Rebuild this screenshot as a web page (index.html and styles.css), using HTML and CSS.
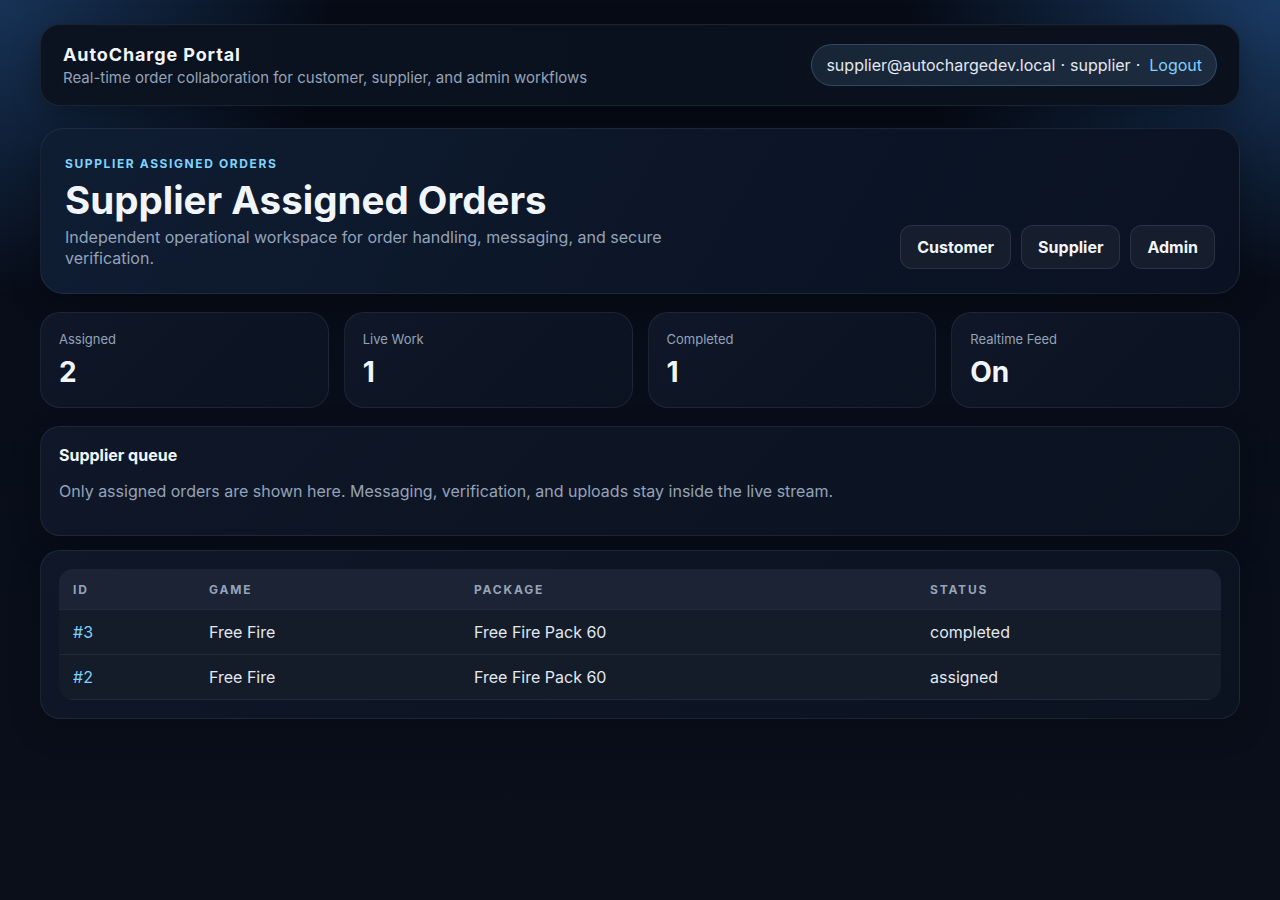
FILE: index.html
```html
<!DOCTYPE html>
<html lang="en">
  <head>
    <meta charset="UTF-8" />
    <meta name="viewport" content="width=device-width, initial-scale=1.0" />
    <title>AutoCharge Portal</title>
    <link rel="stylesheet" href="styles.css">
  </head>
  <body>
    <div class="page">
      <header class="topbar">
        <div class="brand">
          <div class="brand-title">AutoCharge Portal</div>
          <div class="brand-sub">Real-time order collaboration for customer, supplier, and admin workflows</div>
        </div>
        <div class="user-pill">
          <span>supplier@autochargedev.local</span>
          <span class="dot">·</span>
          <span>supplier</span>
          <span class="dot">·</span>
          <a href="#" class="logout">Logout</a>
        </div>
      </header>

      <section class="hero">
        <div class="hero-text">
          <div class="eyebrow">Supplier Assigned Orders</div>
          <h1>Supplier Assigned Orders</h1>
          <p>Independent operational workspace for order handling, messaging, and secure verification.</p>
        </div>
        <div class="role-buttons">
          <button>Customer</button>
          <button>Supplier</button>
          <button>Admin</button>
        </div>
      </section>

      <section class="stats">
        <div class="stat">
          <div class="stat-label">Assigned</div>
          <div class="stat-value">2</div>
        </div>
        <div class="stat">
          <div class="stat-label">Live Work</div>
          <div class="stat-value">1</div>
        </div>
        <div class="stat">
          <div class="stat-label">Completed</div>
          <div class="stat-value">1</div>
        </div>
        <div class="stat">
          <div class="stat-label">Realtime Feed</div>
          <div class="stat-value">On</div>
        </div>
      </section>

      <section class="card queue">
        <h3>Supplier queue</h3>
        <p>Only assigned orders are shown here. Messaging, verification, and uploads stay inside the live stream.</p>
      </section>

      <section class="card table-card">
        <div class="table-wrap">
          <table>
            <thead>
              <tr>
                <th class="col-id">ID</th>
                <th class="col-game">Game</th>
                <th class="col-package">Package</th>
                <th>Status</th>
              </tr>
            </thead>
            <tbody>
              <tr>
                <td><a href="#">#3</a></td>
                <td>Free Fire</td>
                <td>Free Fire Pack 60</td>
                <td>completed</td>
              </tr>
              <tr>
                <td><a href="#">#2</a></td>
                <td>Free Fire</td>
                <td>Free Fire Pack 60</td>
                <td>assigned</td>
              </tr>
            </tbody>
          </table>
        </div>
      </section>
    </div>
  </body>
</html>
```

FILE: styles.css
```css
* {
  box-sizing: border-box;
}
html,
body {
  margin: 0;
  padding: 0;
  min-height: 100%;
}
body {
  min-height: 100vh;
  font-family: Inter, "Noto Sans", sans-serif;
  color: #e2e8f0;
  background-color: #080d18;
  background-image:
    radial-gradient(ellipse 480px 420px at 0% 0%, rgba(40, 90, 150, 0.5), transparent 70%),
    radial-gradient(ellipse 540px 400px at 100% 0%, rgba(40, 90, 150, 0.6), transparent 70%),
    linear-gradient(180deg, #060b16 0%, #080e1a 60%, #0a0f1a 100%);
  background-repeat: no-repeat;
}
.page {
  width: 1200px;
  margin: 0 auto;
  padding-top: 24px;
  display: flex;
  flex-direction: column;
}
.topbar {
  height: 82px;
  display: flex;
  align-items: center;
  justify-content: space-between;
  padding: 0 22px;
  border: 1px solid rgba(148, 163, 184, 0.12);
  border-radius: 20px;
  background: linear-gradient(90deg, #0b1220 0%, #0a111d 100%);
  box-shadow: 0 10px 30px rgba(0, 0, 0, 0.3);
}
.brand-title {
  font-size: 18px;
  font-weight: 700;
  letter-spacing: 0.9px;
  color: #f1f5f9;
  margin-bottom: 3px;
}
.brand-sub {
  font-size: 15px;
  color: #94a3b8;
}
.user-pill {
  display: flex;
  align-items: center;
  gap: 4px;
  height: 42px;
  padding: 0 14px;
  border-radius: 999px;
  background: linear-gradient(90deg, #172537, #1d2b40);
  border: 1px solid rgba(125, 180, 220, 0.25);
  font-size: 16px;
  color: #e2e8f0;
}
.user-pill .dot {
  margin: 0 1px;
}
.logout {
  color: #7dd3fc;
  text-decoration: none;
  margin-left: 4px;
}
.hero {
  margin-top: 22px;
  height: 166px;
  display: flex;
  align-items: flex-end;
  justify-content: space-between;
  padding: 27px 24px 24px 24px;
  border: 1px solid rgba(148, 163, 184, 0.12);
  border-radius: 24px;
  background: linear-gradient(120deg, #0f1d33 0%, #0c1628 50%, #0a1222 100%);
  box-shadow: 0 10px 30px rgba(0, 0, 0, 0.3);
}
.eyebrow {
  font-size: 12px;
  font-weight: 700;
  letter-spacing: 1.6px;
  text-transform: uppercase;
  color: #7dd3fc;
}
.hero h1 {
  margin: 6px 0 4px;
  font-size: 38.5px;
  font-weight: 700;
  line-height: 1.2;
  color: #f1f5f9;
}
.hero p {
  margin: 0;
  width: 640px;
  font-size: 16px;
  line-height: 1.3;
  color: #94a3b8;
}
.role-buttons {
  display: flex;
  gap: 10px;
  margin-bottom: 0;
}
.role-buttons button {
  height: 44px;
  padding: 0 16px;
  border-radius: 12px;
  border: 1px solid rgba(148, 163, 184, 0.16);
  background: #161e2d;
  color: #f1f5f9;
  font-family: inherit;
  font-size: 16px;
  font-weight: 700;
  cursor: pointer;
}
.stats {
  margin-top: 18px;
  display: grid;
  grid-template-columns: repeat(4, 1fr);
  gap: 15px;
}
.stat {
  height: 96px;
  padding: 18px 18px;
  border: 1px solid rgba(148, 163, 184, 0.12);
  border-radius: 20px;
  background: linear-gradient(135deg, #0f1728 0%, #0b1220 100%);
}
.stat-label {
  font-size: 13px;
  color: #94a3b8;
}
.stat-value {
  margin-top: 8px;
  font-size: 28px;
  font-weight: 700;
  color: #f1f5f9;
}
.card {
  border: 1px solid rgba(148, 163, 184, 0.12);
  border-radius: 20px;
  background: linear-gradient(135deg, #0f1728 0%, #0b1220 100%);
  box-shadow: 0 10px 30px rgba(0, 0, 0, 0.25);
}
.queue {
  margin-top: 18px;
  height: 110px;
  padding: 18px 18px;
}
.queue h3 {
  margin: 0;
  font-size: 16px;
  font-weight: 700;
  color: #f1f5f9;
}
.queue p {
  margin: 16px 0 0;
  font-size: 16px;
  color: #94a3b8;
}
.table-card {
  margin-top: 14px;
  padding: 18px 18px;
}
.table-wrap {
  border-radius: 14px;
  overflow: hidden;
  background: #141b29;
}
table {
  width: 100%;
  border-collapse: collapse;
}
th {
  height: 40px;
  padding: 1px 14px 0;
  text-align: left;
  background: #1b2334;
  font-size: 12px;
  font-weight: 700;
  letter-spacing: 1.8px;
  text-transform: uppercase;
  color: #94a3b8;
  border-bottom: 1px solid rgba(148, 163, 184, 0.12);
}
.col-id {
  width: 136px;
}
.col-game {
  width: 265px;
}
.col-package {
  width: 456px;
}
td {
  height: 45px;
  padding: 0 14px;
  font-size: 16px;
  color: #e2e8f0;
  border-bottom: 1px solid rgba(148, 163, 184, 0.12);
}
td a {
  color: #7dd3fc;
  text-decoration: none;
}
```
